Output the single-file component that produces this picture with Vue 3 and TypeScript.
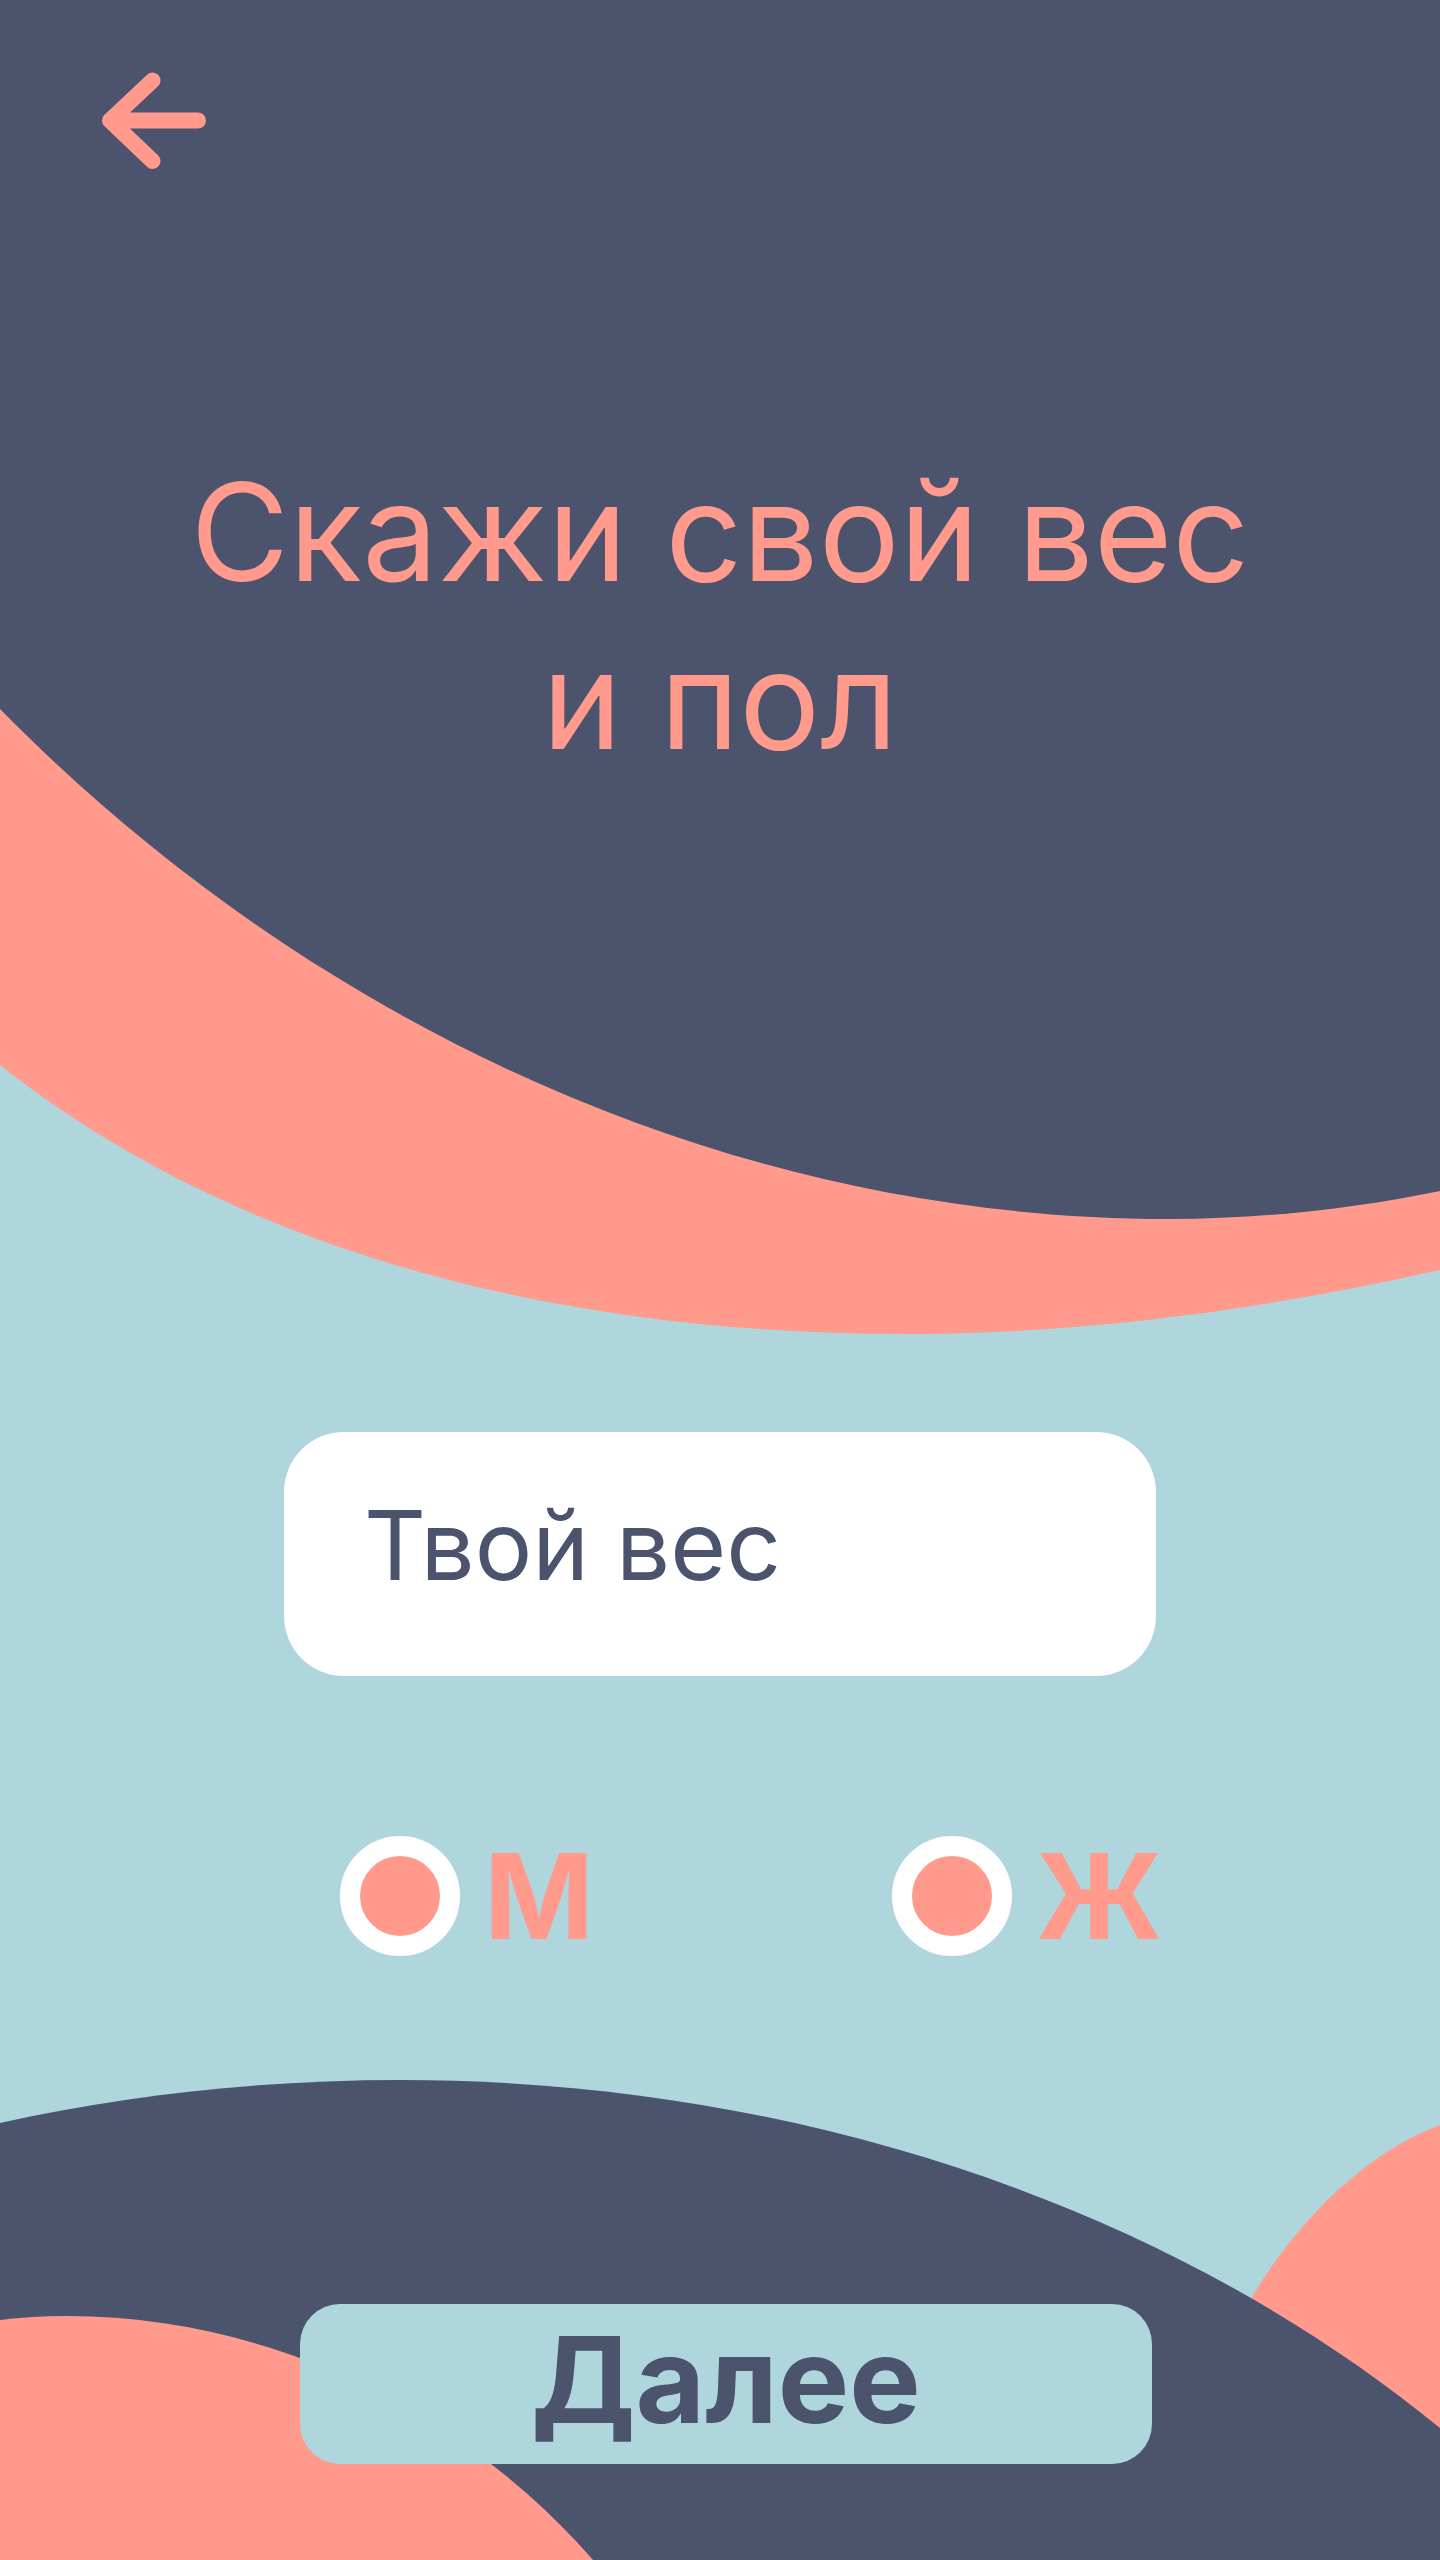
<script setup lang="ts">
import { ref } from 'vue'

type Gender = 'm' | 'f'

const weight = ref('')
const gender = ref<Gender | null>(null)
const genders: { value: Gender; label: string }[] = [
  { value: 'm', label: 'М' },
  { value: 'f', label: 'Ж' },
]
</script>

<template>
  <main class="screen">
    <svg class="waves" viewBox="0 0 1440 2560" preserveAspectRatio="none" aria-hidden="true">
      <path class="coral" d="M0 0H1440V1270C1262 1310 1084 1334 905 1334C541 1334 226 1244 0 1065Z" />
      <path class="dark" d="M0 0H1440V1191C1352 1209 1260 1219 1169 1219C724 1219 306 1020 0 709Z" />
      <path class="coral" d="M1252 2297C1297 2221 1365 2153 1440 2125V2560H1252Z" />
      <path class="dark" d="M0 2123C130 2094 267 2080 400 2080C811 2080 1180 2215 1440 2428V2560H0Z" />
      <path class="coral" d="M0 2320Q33 2316 66 2316C288 2316 478 2427 593 2560H0Z" />
    </svg>

    <header class="top">
      <button class="back" type="button" aria-label="Назад">
        <svg viewBox="0 0 112 104" width="112" height="104" aria-hidden="true">
          <path d="M54.5 12.5L12 52.5L54.5 93M12 52.5H100" />
        </svg>
      </button>
    </header>

    <h1 class="title">Скажи свой вес<br />и пол</h1>

    <form class="form" @submit.prevent>
      <input v-model="weight" class="weight" type="text" inputmode="numeric" placeholder="Твой вес" aria-label="Твой вес" />

      <div class="genders" role="radiogroup" aria-label="Пол">
        <label v-for="g in genders" :key="g.value" class="gender">
          <input v-model="gender" class="radio" type="radio" name="gender" :value="g.value" />
          <span>{{ g.label }}</span>
        </label>
      </div>

      <div class="actions">
        <button class="next" type="submit">Далее</button>
      </div>
    </form>
  </main>
</template>

<style>
body {
  margin: 0;
}
</style>

<style scoped>
.screen {
  --dark: #4c536c;
  --coral: #ff9a8c;
  --sky: #afd6dd;
  position: relative;
  z-index: 0;
  display: flex;
  flex-direction: column;
  box-sizing: border-box;
  min-height: 100vh;
  padding: 68px 0 96px;
  overflow: hidden;
  background: var(--sky);
  font-family: Inter, "Liberation Sans", sans-serif;
}

.waves {
  position: absolute;
  inset: 0;
  z-index: -1;
  width: 100%;
  height: 100%;
}

.dark {
  fill: var(--dark);
}

.coral {
  fill: var(--coral);
}

.top {
  display: flex;
  padding: 0 98px;
}

.back {
  display: flex;
  padding: 0;
  border: 0;
  background: none;
  cursor: pointer;
}

.back path {
  fill: none;
  stroke: var(--coral);
  stroke-width: 16;
  stroke-linecap: round;
  stroke-linejoin: round;
}

.title {
  margin: 276px 0 0;
  color: var(--coral);
  font-size: 135px;
  font-weight: 400;
  line-height: 168px;
  text-align: center;
}

.form {
  display: flex;
  flex-direction: column;
  flex: 1;
  box-sizing: border-box;
  width: 100%;
  max-width: 872px;
  margin: 648px auto 0;
}

.weight {
  box-sizing: border-box;
  width: 100%;
  height: 244px;
  padding: 0 80px 18px;
  border: 0;
  border-radius: 60px;
  background: #fff;
  color: var(--dark);
  font: 400 96px Inter, "Liberation Sans", sans-serif;
}

.weight::placeholder {
  color: var(--dark);
  opacity: 1;
}

.genders {
  display: grid;
  grid-template-columns: 552px auto;
  margin-top: 160px;
  padding-left: 56px;
}

.gender {
  display: flex;
  align-items: center;
  gap: 24px;
  height: 120px;
  color: var(--coral);
  font-size: 118px;
  font-weight: 700;
  line-height: 120px;
}

.radio {
  flex: none;
  box-sizing: border-box;
  width: 120px;
  height: 120px;
  margin: 0;
  appearance: none;
  border: 20px solid #fff;
  border-radius: 50%;
  background: var(--coral);
}

.actions {
  display: flex;
  margin-top: auto;
  padding: 0 4px 0 16px;
}

.next {
  flex: 1;
  height: 160px;
  padding: 0 0 8px;
  border: 0;
  border-radius: 40px;
  background: var(--sky);
  color: var(--dark);
  font: 700 120px/152px Inter, "Liberation Sans", sans-serif;
  cursor: pointer;
}
</style>
